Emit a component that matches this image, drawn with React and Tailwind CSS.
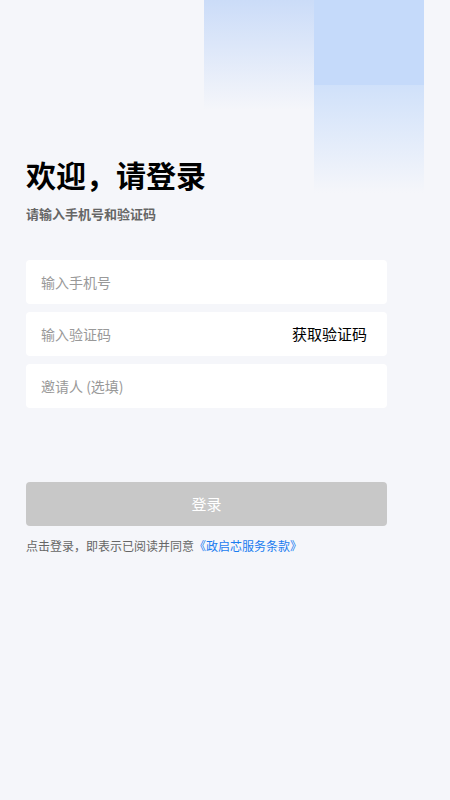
import React from 'react';

const App = () => {
    return (
        <div
            className="relative min-h-[800px] w-full overflow-hidden bg-[#f5f6fa]"
            style={{ fontFamily: '"Noto Sans CJK SC", "Noto Sans", sans-serif' }}
        >
            {/* Decoration */}
            <div className="absolute left-[204px] top-0 h-[110px] w-[110px] bg-gradient-to-b from-[#cbdcf8] to-[#f5f6fa]" />
            <div className="absolute left-[314px] top-0 flex w-[110px] flex-col">
                <div className="h-[85px] bg-[#c5dafa]" />
                <div className="h-[108px] bg-gradient-to-b from-[#d0e1fa] to-[#f5f6fa]" />
            </div>

            <main className="relative flex flex-col px-[26px] pt-[157px]">
                <h1 className="text-[30px] font-bold leading-[34px] text-black">欢迎，请登录</h1>
                <p className="mt-[14px] text-[13px] font-bold leading-[18px] text-[#666666]">请输入手机号和验证码</p>

                <div className="mt-[37px] flex w-[361px] flex-col gap-2">
                    <div className="flex h-11 items-center rounded bg-white px-[15px]">
                        <span className="text-[14px] text-[#999999]">输入手机号</span>
                    </div>
                    <div className="flex h-11 items-center justify-between rounded bg-white pl-[15px] pr-[20px]">
                        <span className="text-[14px] text-[#999999]">输入验证码</span>
                        <span className="text-[15px] text-black">获取验证码</span>
                    </div>
                    <div className="flex h-11 items-center rounded bg-white px-[15px]">
                        <span className="text-[14px] text-[#999999]">邀请人 (选填)</span>
                    </div>
                </div>

                <button className="mt-[74px] flex h-11 w-[361px] items-center justify-center rounded bg-[#c8c8c8] text-[15px] text-white">
                    登录
                </button>

                <p className="mt-3 text-[12px] leading-4 text-[#666666]">
                    点击登录，即表示已阅读并同意<span className="text-[#1a7cf0]">《政启芯服务条款》</span>
                </p>
            </main>
        </div>
    );
};

export default App;
